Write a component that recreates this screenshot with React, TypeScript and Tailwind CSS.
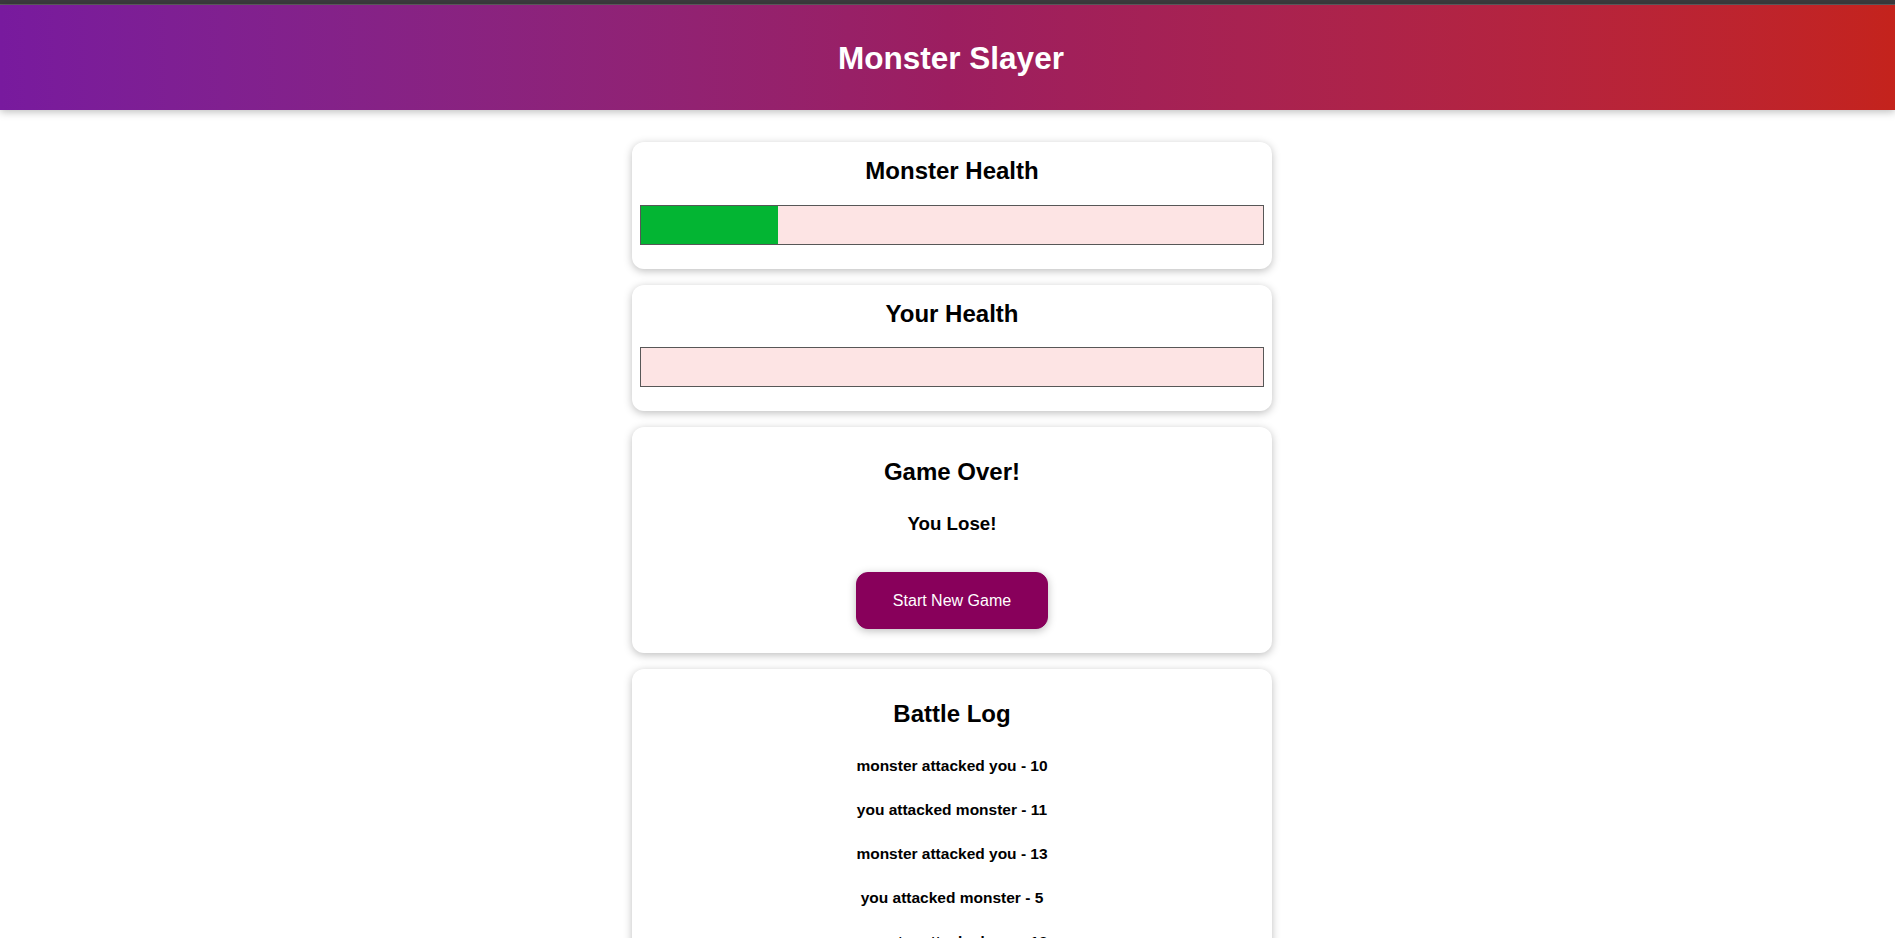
const logs = [
  'monster attacked you - 10',
  'you attacked monster - 11',
  'monster attacked you - 13',
  'you attacked monster - 5',
  'monster attacked you - 12',
];

const HealthCard = ({ title, value }: { title: string; value: number }) => (
  <section className="w-[640px] p-2 rounded-xl bg-white text-center shadow-[0_2px_8px_rgba(0,0,0,0.26)]">
    <h2 className="mt-1 text-2xl font-bold leading-[34.68px]">{title}</h2>
    <div className="mt-4 mb-4 h-10 border border-[#575757] bg-[#fde4e4]">
      <div className="h-full bg-[#03b533]" style={{ width: `${value}%` }} />
    </div>
  </section>
);

const App = () => {
  return (
    <div className="min-h-screen bg-white text-black font-['Liberation_Sans',Arial,sans-serif]">
      <div className="h-[5px] bg-[#3b3b3d] border-b border-[#5e5e60]" />
      <header className="h-[105px] flex items-center justify-center bg-gradient-to-r from-[#781a9e] via-[#9c1e60] to-[#c4231c] shadow-[0_2px_8px_rgba(0,0,0,0.26)]">
        <h1 className="pl-[7px] text-[31.5px] font-bold leading-[46px] text-white">Monster Slayer</h1>
      </header>

      <main className="flex flex-col items-center gap-4 pt-[32px] pb-8 pl-[9px]">
        <HealthCard title="Monster Health" value={22} />
        <HealthCard title="Your Health" value={0} />

        <section className="w-[640px] p-2 rounded-xl bg-white text-center shadow-[0_2px_8px_rgba(0,0,0,0.26)]">
          <h2 className="mt-[19.92px] text-2xl font-bold leading-[34.68px]">Game Over!</h2>
          <h3 className="mt-[19.92px] text-[18.72px] font-bold leading-[27px]">You Lose!</h3>
          <button className="mt-[34.72px] mb-4 w-48 py-4 border border-[#88005b] rounded-xl bg-[#88005b] text-base leading-[23.1px] text-white shadow-[0_2px_8px_rgba(0,0,0,0.26)]">
            Start New Game
          </button>
        </section>

        <section className="w-[640px] p-2 rounded-xl bg-white text-center shadow-[0_2px_8px_rgba(0,0,0,0.26)]">
          <h2 className="mt-[19.92px] text-2xl font-bold leading-[34.68px]">Battle Log</h2>
          <ul className="mt-[12px]">
            {logs.map((log, i) => (
              <li key={i} className="py-[10.5px] text-[15.5px] font-bold leading-[23px]">
                {log}
              </li>
            ))}
          </ul>
        </section>
      </main>
    </div>
  );
};

export default App;
